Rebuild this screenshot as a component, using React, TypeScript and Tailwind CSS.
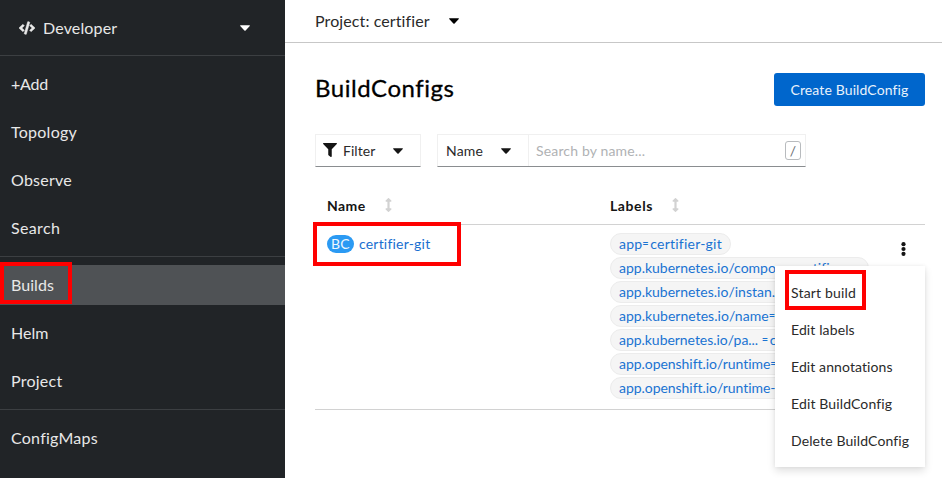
import type { ReactNode } from "react";

function Caret({ className = "" }: { className?: string }) {
  return (
    <svg viewBox="0 0 10 6" className={`h-[6px] w-[10px] shrink-0 ${className}`} fill="currentColor">
      <path d="M0.6 0.2h8.8c.5 0 .7.5.4.9L5.6 5.4c-.3.4-.8.4-1.2 0L.2 1.1C-.1.7.1.2.6.2z" />
    </svg>
  );
}

function SortIcon() {
  return (
    <svg viewBox="0 0 256 512" className="-mt-[2px] h-[14px] w-[7px] shrink-0" fill="#d2d2d2">
      <path d="M214.059 377.941H168V134.059h46.059c21.382 0 32.09-25.851 16.971-40.971L144.971 7.029c-9.373-9.373-24.568-9.373-33.941 0L24.971 93.088c-15.119 15.119-4.411 40.971 16.971 40.971H88v243.882H41.941c-21.382 0-32.09 25.851-16.971 40.971l86.059 86.059c9.373 9.373 24.568 9.373 33.941 0l86.059-86.059c15.12-15.119 4.412-40.971-16.97-40.971z" />
    </svg>
  );
}

function CodeIcon() {
  return (
    <svg viewBox="0 0 640 512" className="h-[14px] w-[16px] shrink-0" fill="currentColor" stroke="currentColor" strokeWidth="18">
      <path d="M278.9 511.5l-61-17.7c-6.4-1.8-10-8.5-8.2-14.9L346.2 8.7c1.8-6.4 8.5-10 14.9-8.2l61 17.7c6.4 1.8 10 8.5 8.2 14.9L293.8 503.3c-1.900 6.400-8.500 10.100-14.900 8.200zm-114-112.200l43.500-46.400c4.600-4.900 4.300-12.700-.8-17.200L117 256l90.600-79.700c5.100-4.500 5.500-12.300.8-17.200l-43.500-46.400c-4.500-4.800-12.100-5.100-17-.5L3.800 247.200c-5.100 4.700-5.100 12.800 0 17.500l144.100 135.100c4.900 4.600 12.500 4.400 17-.5zm327.200.6l144.100-135.100c5.100-4.700 5.100-12.800 0-17.500L492.100 112.100c-4.800-4.500-12.400-4.300-17 .5L431.600 159c-4.600 4.900-4.300 12.700.8 17.200L523 256l-90.600 79.700c-5.100 4.500-5.500 12.300-.8 17.200l43.500 46.400c4.500 4.900 12.100 5.100 17 .6z" />
    </svg>
  );
}

function FilterIcon() {
  return (
    <svg viewBox="0 0 512 512" className="-mt-[2px] size-[14px] shrink-0" fill="#151515">
      <path d="M487.976 0H24.028C2.71 0-8.047 25.866 7.058 40.971L192 225.941V432c0 7.831 3.821 15.17 10.237 19.662l80 55.98C298.02 518.69 320 507.493 320 487.98V225.941l184.947-184.97C520.021 25.896 509.338 0 487.976 0z" />
    </svg>
  );
}

function NavItem({ children, active = false, spacing = "tracking-[0.25px]" }: { children: ReactNode; active?: boolean; spacing?: string }) {
  return (
    <a className={`flex h-10 items-center pl-[11px] ${active ? "bg-[#4f5255]" : ""} ${spacing}`}>{children}</a>
  );
}

function Eq() {
  return <span className="inline-block w-[8px] align-[2px] text-[11px] leading-none">=</span>;
}

function Chip({ children, className = "" }: { children: ReactNode; className?: string }) {
  return (
    <div className={`flex h-[22px] items-center rounded-full border border-[#ececec] bg-[#f5f5f5] pl-2 text-sm whitespace-nowrap text-[#1a73d2] ${className}`}>
      <span>{children}</span>
    </div>
  );
}

export default function App() {
  return (
    <div className="relative flex h-[478px] w-[942px] overflow-hidden bg-white font-[Lato,sans-serif] text-[#2a2a2a] [font-variant-ligatures:none]">
      <aside className="w-[285px] shrink-0 bg-[#212427] text-base text-[#e8e8e8]">
        <div className="flex h-14 items-center border-b border-[#3c3f42] pr-[35px] pl-[19px]">
          <CodeIcon />
          <span className="ml-2 flex-1 tracking-[0.15px]">Developer</span>
          <Caret className="text-white" />
        </div>
        <nav>
          <div className="flex flex-col gap-2 border-b border-[#3c3f42] py-2">
            <NavItem spacing="tracking-[-0.2px]">+Add</NavItem>
            <NavItem>Topology</NavItem>
            <NavItem>Observe</NavItem>
            <NavItem spacing="tracking-[0.35px]">Search</NavItem>
          </div>
          <div className="flex flex-col gap-2 border-b border-[#3c3f42] py-2">
            <NavItem active spacing="tracking-[0.05px]">Builds</NavItem>
            <NavItem spacing="tracking-[0.05px]">Helm</NavItem>
            <NavItem>Project</NavItem>
          </div>
          <div className="py-2">
            <NavItem>ConfigMaps</NavItem>
          </div>
        </nav>
      </aside>

      <main className="flex-1">
        <div className="flex h-[43px] items-center border-b border-[#c7c7c7] pl-[30px] text-base">
          <span className="w-[134px] tracking-[0.1px]">Project: certifier</span>
          <Caret className="text-black" />
        </div>

        <div className="pr-[17px] pl-[30px]">
          <header className="mt-[30px] flex h-[33px] items-center justify-between">
            <h1 className="-mt-1 text-2xl tracking-[0.55px] text-black [-webkit-text-stroke:0.3px_#000]">BuildConfigs</h1>
            <button className="h-[33px] w-[151px] rounded-[3px] bg-[#0066cc] text-sm tracking-[0.12px] whitespace-nowrap text-[#e9f2fb]">Create BuildConfig</button>
          </header>

          <div className="mt-7 flex h-[33px] gap-4 text-sm">
            <button className="flex w-[106px] items-center border border-[#f0f0f0] border-b-[#8a8d90] pl-[7px]">
              <FilterIcon />
              <span className="ml-[6px] w-[50px] text-left tracking-[0.05px]">Filter</span>
              <Caret className="text-[#151515]" />
            </button>
            <div className="flex w-[369px] border border-[#f0f0f0] border-b-[#8a8d90]">
              <button className="flex w-[91px] items-center border-r border-[#f0f0f0] pl-[8px]">
                <span className="w-[55px] text-left tracking-[0.2px]">Name</span>
                <Caret className="text-[#151515]" />
              </button>
              <div className="flex flex-1 items-center justify-between pr-1 pl-[7px]">
                <span className="tracking-[0.16px] text-[#b0b2b4]">Search by name...</span>
                <kbd className="flex h-[19px] w-4 items-center justify-center rounded-[3px] border border-[#b8bbbe] font-[Lato,sans-serif] text-[#6a6e73]">/</kbd>
              </div>
            </div>
          </div>

          <div className="mt-5 flex h-[38px] items-center border-b border-[#d2d2d2] pl-3 text-sm font-bold text-[#151515]">
            <div className="flex w-[283px] items-center">
              <span className="w-[58px] tracking-[0.45px]">Name</span>
              <SortIcon />
            </div>
            <div className="flex items-center">
              <span className="w-[62px] tracking-[0.6px]">Labels</span>
              <SortIcon />
            </div>
          </div>

          <div className="flex h-[185px] items-start border-b border-[#d2d2d2] pl-3">
            <div className="flex w-[283px] items-center pt-[9px] text-sm">
              <span className="flex h-[18px] w-[27px] items-center justify-center rounded-full bg-[#2b9af3] tracking-[0.3px] text-[#eef7fe]">BC</span>
              <a className="ml-[5px] tracking-[0.2px] text-[#1a6fd0]">certifier-git</a>
            </div>
            <div className="flex flex-1 flex-col gap-[2px] pt-2">
              <Chip className="w-[121px] tracking-[0.22px]">app<Eq />certifier-git</Chip>
              <Chip className="w-[259px]">app.kubernetes.io/compo...<Eq />certifier...</Chip>
              <Chip className="w-[259px]">app.kubernetes.io/instan...<Eq />certifier...</Chip>
              <Chip className="w-[220px] tracking-[0.03px]">app.kubernetes.io/name<Eq />certifier-git</Chip>
              <Chip className="w-[220px] tracking-[-0.04px]">app.kubernetes.io/pa... <Eq />certifier-...</Chip>
              <Chip className="w-[220px] tracking-[-0.05px]">app.openshift.io/runtime<Eq />nodejs</Chip>
              <Chip className="w-[220px] tracking-[-0.05px]">app.openshift.io/runtime-version</Chip>
            </div>
            <svg viewBox="0 0 5 14" className="mt-[17px] mr-[19px] h-[14px] w-[5px]" fill="#151515">
              <circle cx="2.5" cy="2.2" r="2.1" />
              <circle cx="2.5" cy="7" r="2.1" />
              <circle cx="2.5" cy="11.8" r="2.1" />
            </svg>
          </div>
        </div>
      </main>

      <div className="absolute top-[266px] left-[775px] flex h-[201px] w-[150px] flex-col bg-white py-2 pl-4 text-sm whitespace-nowrap shadow-[0_4px_8px_rgba(3,3,3,0.12),0_0_4px_rgba(3,3,3,0.06)]">
        <span className="flex h-[37px] items-center tracking-[0.17px]">Start build</span>
        <span className="flex h-[37px] items-center tracking-[0.12px]">Edit labels</span>
        <span className="flex h-[37px] items-center tracking-[0.1px]">Edit annotations</span>
        <span className="flex h-[37px] items-center tracking-[0.13px]">Edit BuildConfig</span>
        <span className="flex h-[37px] items-center tracking-[0.12px]">Delete BuildConfig</span>
      </div>

      <div className="absolute top-[262px] left-0 h-[42px] w-[72px] border-4 border-[#ff0000]" />
      <div className="absolute top-[222px] left-[313px] h-11 w-[148px] border-4 border-[#ff0000]" />
      <div className="absolute top-[270px] left-[785px] h-10 w-[81px] border-4 border-[#ff0000]" />
    </div>
  );
}
